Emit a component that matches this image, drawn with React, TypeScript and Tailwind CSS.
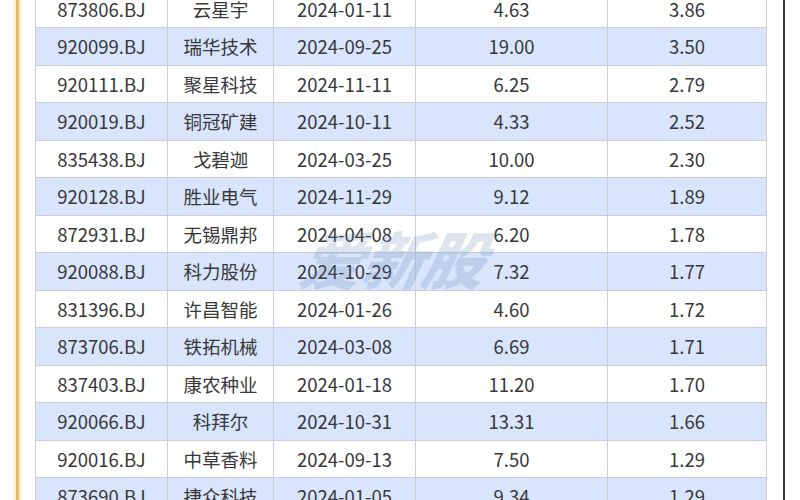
import React from "react";

const rows = [
  ["873806.BJ", "云星宇", "2024-01-11", "4.63", "3.86"],
  ["920099.BJ", "瑞华技术", "2024-09-25", "19.00", "3.50"],
  ["920111.BJ", "聚星科技", "2024-11-11", "6.25", "2.79"],
  ["920019.BJ", "铜冠矿建", "2024-10-11", "4.33", "2.52"],
  ["835438.BJ", "戈碧迦", "2024-03-25", "10.00", "2.30"],
  ["920128.BJ", "胜业电气", "2024-11-29", "9.12", "1.89"],
  ["872931.BJ", "无锡鼎邦", "2024-04-08", "6.20", "1.78"],
  ["920088.BJ", "科力股份", "2024-10-29", "7.32", "1.77"],
  ["831396.BJ", "许昌智能", "2024-01-26", "4.60", "1.72"],
  ["873706.BJ", "铁拓机械", "2024-03-08", "6.69", "1.71"],
  ["837403.BJ", "康农种业", "2024-01-18", "11.20", "1.70"],
  ["920066.BJ", "科拜尔", "2024-10-31", "13.31", "1.66"],
  ["920016.BJ", "中草香料", "2024-09-13", "7.50", "1.29"],
  ["873690.BJ", "捷众科技", "2024-01-05", "9.34", "1.29"],
];

export default function App() {
  return (
    <div
      className="w-[800px] h-[500px] overflow-hidden bg-white flex"
      style={{ fontFamily: '"Noto Sans CJK SC", "Noto Sans", sans-serif' }}
    >
      {/* left gold rule */}
      <div className="w-[16px] shrink-0" />
      <div className="w-[3px] shrink-0 bg-[#e4bf66] shadow-[0_0_3px_2px_#f7ebc4]" />
      <div className="w-[16px] shrink-0" />

      <div className="relative w-[731px] shrink-0">
        <div className="-mt-[9.5px] border-l border-[#c9ced8]">
          {rows.map((r, i) => (
            <div
              key={r[0]}
              className={
                "grid grid-cols-[132px_106px_142px_192px_159px] h-[37.5px] text-[18.5px] text-[#383838] " +
                (i % 2 === 1 ? "bg-[#d8e5fc]" : "bg-white")
              }
            >
              {r.map((c, j) => (
                <div
                  key={j}
                  className="flex items-center justify-center border-r border-b border-[#c9ced8] leading-none"
                >
                  {c}
                </div>
              ))}
            </div>
          ))}
        </div>

        {/* watermark */}
        <div className="absolute left-[268px] top-[226px] text-[62px] font-black italic leading-none tracking-[-1px] text-[#5b7aa8]/20 select-none -skew-x-12">
          爱新股
        </div>
      </div>

      <div className="w-[17px] shrink-0" />
      {/* right dark rule */}
      <div className="w-[2px] shrink-0 bg-[#333]" />
      <div className="flex-1" />
    </div>
  );
}
